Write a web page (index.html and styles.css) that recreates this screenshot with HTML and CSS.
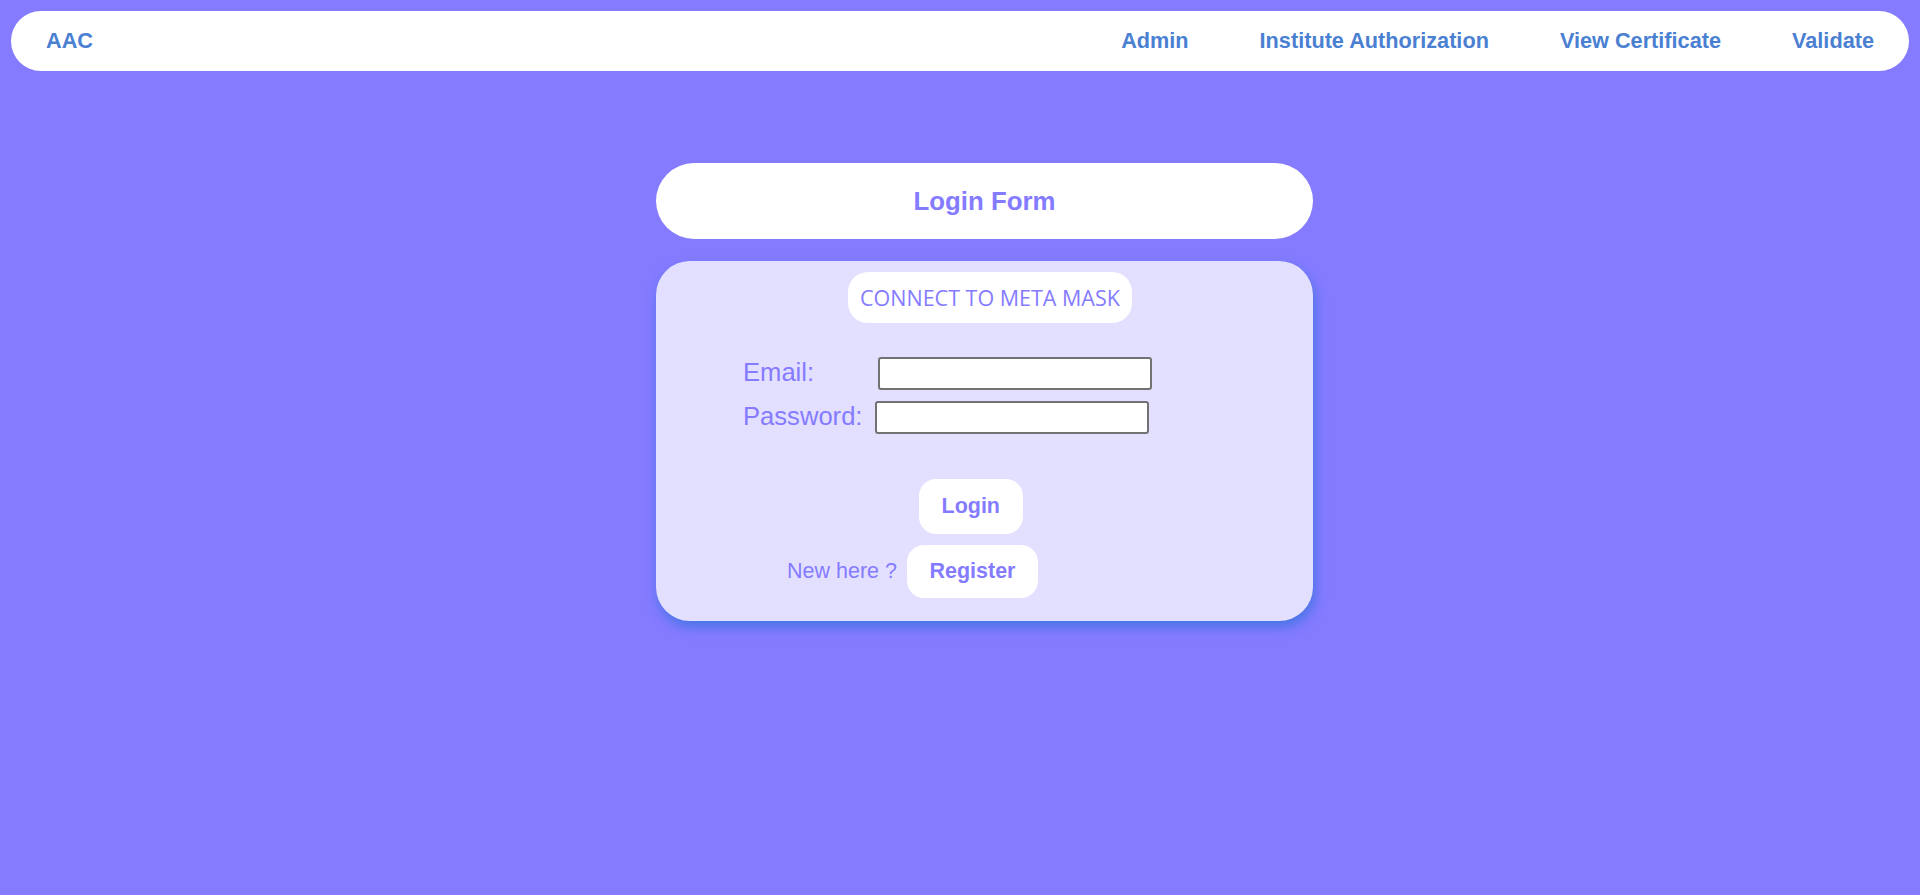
FILE: index.html
```html
<!DOCTYPE html>
<html lang="en">
<head>
<meta charset="utf-8">
<title>AAC - Login</title>
<link rel="stylesheet" href="styles.css">
</head>
<body>
  <nav class="navbar">
    <a class="brand" href="#">AAC</a>
    <div class="nav-links">
      <a class="nav-link" href="#">Admin</a>
      <a class="nav-link" href="#">Institute Authorization</a>
      <a class="nav-link" href="#">View Certificate</a>
      <a class="nav-link" href="#">Validate</a>
    </div>
  </nav>

  <main class="main">
    <div class="login-wrap">
      <div class="login-title">Login Form</div>
      <form class="login-card">
        <button type="button" class="connect-btn">CONNECT TO META MASK</button>
        <div class="field-row row-email">
          <label class="field-label label-email" for="email">Email:</label>
          <input class="field-input" id="email" type="email">
        </div>
        <div class="field-row row-password">
          <label class="field-label" for="password">Password:</label>
          <input class="field-input" id="password" type="password">
        </div>
        <button type="button" class="pill-btn login-btn">Login</button>
        <div class="register-row">
          <span class="new-here">New here ?</span>
          <button type="button" class="pill-btn register-btn">Register</button>
        </div>
      </form>
    </div>
  </main>
</body>
</html>
```

FILE: styles.css
```css
html, body {
  margin: 0;
  padding: 0;
}

body {
  background: #857bff;
  min-height: 100vh;
  font-family: "Liberation Sans", Arial, sans-serif;
}

.navbar {
  margin: 11px 11px 0 11px;
  height: 60px;
  background: #ffffff;
  border-radius: 30px;
  display: flex;
  align-items: center;
  justify-content: space-between;
  padding: 0 35px;
}

.brand,
.nav-link {
  color: #4a80d2;
  font-weight: bold;
  font-size: 21.7px;
  text-decoration: none;
}

.nav-links {
  display: flex;
  gap: 71px;
}

.main {
  display: flex;
  justify-content: center;
  padding-left: 49px;
  padding-top: 92px;
}

.login-wrap {
  width: 657px;
  display: flex;
  flex-direction: column;
  gap: 22px;
}

.login-title {
  height: 76px;
  background: #ffffff;
  border-radius: 40px;
  display: flex;
  align-items: center;
  justify-content: center;
  color: #857bff;
  font-weight: bold;
  font-size: 25.8px;
}

.login-card {
  background: #e3e0ff;
  border-radius: 34px;
  box-shadow: 2px 6px 12px rgba(50, 115, 220, 0.75);
  display: flex;
  flex-direction: column;
  align-items: flex-start;
  padding: 11px 0 23px 0;
  margin: 0;
}

.connect-btn {
  margin-left: 192px;
  height: 51px;
  padding: 0 12px;
  border: none;
  background: #ffffff;
  border-radius: 20px;
  color: #857bff;
  font-family: "Open Sans", sans-serif;
  font-size: 21.5px;
  font-weight: 400;
  cursor: pointer;
}

.field-row {
  display: flex;
  align-items: center;
  margin-left: 87px;
  height: 33px;
}

.row-email {
  margin-top: 34px;
}

.row-password {
  margin-top: 11px;
}

.field-label {
  color: #857bff;
  font-size: 25.6px;
  line-height: 28px;
  margin-right: 13px;
  margin-bottom: 4px;
}

.label-email {
  min-width: 122px;
}

.field-input {
  box-sizing: border-box;
  width: 274px;
  height: 33px;
  border: 2px solid #727272;
  border-radius: 3px;
  background: #ffffff;
  padding: 1px 4px;
  font-size: 16px;
}

.pill-btn {
  border: none;
  background: #ffffff;
  color: #857bff;
  font-family: "Liberation Sans", Arial, sans-serif;
  font-weight: bold;
  font-size: 21.5px;
  border-radius: 17px;
  padding: 0 22.5px;
  cursor: pointer;
}

.login-btn {
  margin-top: 45px;
  margin-left: 263px;
  height: 55px;
}

.register-row {
  margin-top: 11px;
  margin-left: 131px;
  display: flex;
  align-items: center;
  gap: 10px;
}

.new-here {
  color: #857bff;
  font-size: 21.5px;
}

.register-btn {
  height: 53px;
}
```
